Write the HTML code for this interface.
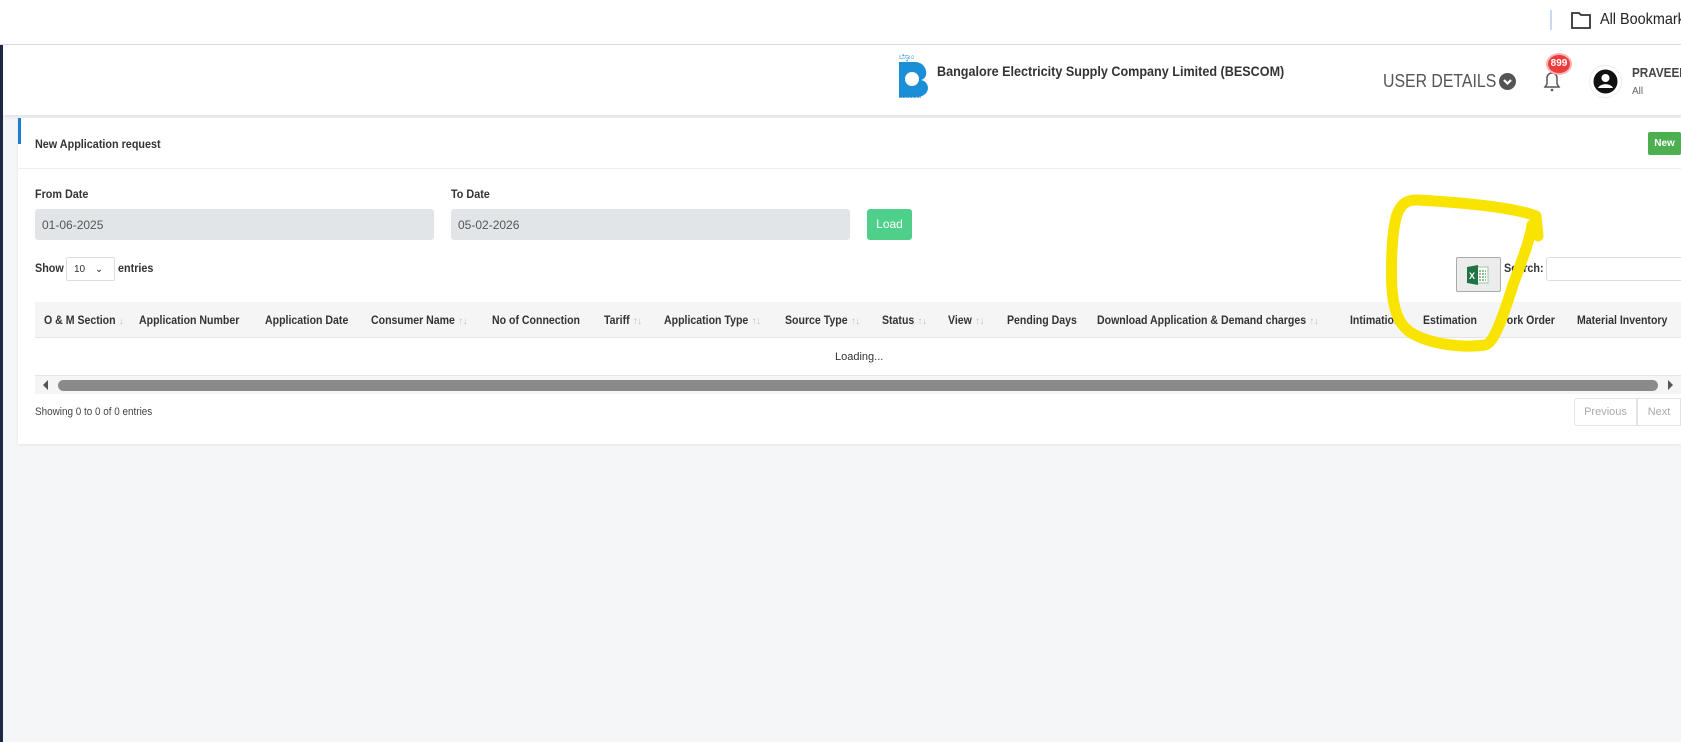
<!DOCTYPE html>
<html><head><meta charset="utf-8"><style>
*{box-sizing:border-box;margin:0;padding:0}
body{width:1681px;height:742px;overflow:hidden;background:#f5f6f8;font-family:"Liberation Sans",sans-serif;position:relative;color:#333}
.a{position:absolute;white-space:nowrap}
.n{transform:scaleX(.9);transform-origin:left center}
.th{position:absolute;top:313px;font-size:12px;font-weight:bold;color:#333;transform:scaleX(.88);transform-origin:left center;white-space:nowrap}
.s{color:#bbb;font-weight:normal;font-size:10px;margin-left:4px}
</style></head><body>
<div class="a" style="left:0;top:0;width:1681px;height:45px;background:#fff;border-bottom:1px solid #dcdcdc"></div>
<div class="a" style="left:1550px;top:10px;width:2px;height:20px;background:#c8d8ee"></div>
<svg class="a" style="left:1570px;top:10px" width="22" height="20"><path d="M2 3h7l2 2h9v13H2z" fill="none" stroke="#333" stroke-width="1.8"/></svg>
<div class="a n" style="left:1600px;top:11px;font-size:16px;color:#222">All Bookmarks</div>
<div class="a" style="left:0;top:45px;width:3px;height:697px;background:#1c2a44"></div>
<div class="a" style="left:3px;top:45px;width:1678px;height:70px;background:#fff;box-shadow:0 2px 4px rgba(0,0,0,.08)"></div>
<svg class="a" style="left:898px;top:51px" width="34" height="48"><text x="1" y="8" font-size="7" fill="#1a8ad0" font-family="Liberation Sans">ಬೆಸ್ಕಾಂ</text><path d="M1 11h16c12 0 15 16 6 18 10 2 10 17-5 17H1z" fill="#1a8fd8"/><circle cx="14" cy="28" r="7" fill="#fff"/><text x="1" y="47" font-size="5" font-weight="bold" fill="#1a8ad0" font-family="Liberation Sans">BESCOM</text></svg>
<div class="a n" style="left:937px;top:63px;font-size:14px;font-weight:bold;color:#333">Bangalore Electricity Supply Company Limited (BESCOM)</div>
<div class="a" style="left:1383px;top:71px;font-size:18px;color:#555;transform:scaleX(.88);transform-origin:left center">USER DETAILS</div>
<div class="a" style="left:1499px;top:73px;width:17px;height:17px;border-radius:50%;background:#555"></div>
<svg class="a" style="left:1499px;top:73px" width="17" height="17"><path d="M5 7l3.5 3.5L12 7" stroke="#fff" stroke-width="2.2" fill="none"/></svg>
<svg class="a" style="left:1540px;top:68px" width="24" height="26"><path d="M5 19h14l-2-3v-6a5 5 0 0 0-10 0v6z" fill="none" stroke="#555" stroke-width="1.5"/><circle cx="12" cy="22" r="1.3" fill="#555"/></svg>
<div class="a" style="left:1546px;top:53px;width:26px;height:22px;border-radius:50%;background:#ee3b3b;border:2px solid #f9b5b5;color:#fff;font-size:10px;font-weight:bold;text-align:center;line-height:18px">899</div>
<div class="a" style="left:1589px;top:65px;width:33px;height:33px;border-radius:50%;background:#fff;border:1px solid #eee"></div>
<svg class="a" style="left:1592px;top:68px" width="27" height="27"><circle cx="13.5" cy="13.5" r="12" fill="#111"/><circle cx="13.5" cy="10" r="4" fill="#fff"/><path d="M6 20c2-5 13-5 15 0" fill="#fff"/></svg>
<div class="a n" style="left:1632px;top:65px;font-size:13px;font-weight:bold;color:#444">PRAVEEN</div>
<div class="a" style="left:1632px;top:86px;font-size:10px;color:#666">All</div>

<div class="a" style="left:18px;top:118px;width:1663px;height:326px;background:#fff;box-shadow:0 1px 3px rgba(0,0,0,.08)"></div>
<div class="a" style="left:18px;top:118px;width:3px;height:26px;background:#1a7fd0"></div>
<div class="a n" style="left:35px;top:137px;font-size:12px;font-weight:bold;color:#333">New Application request</div>
<div class="a" style="left:18px;top:168px;width:1663px;height:1px;background:#eee"></div>
<div class="a" style="left:1648px;top:132px;width:33px;height:23px;background:#4caf50;border-radius:2px;color:#fff;font-size:10px;font-weight:bold;text-align:center;line-height:23px">New</div>
<div class="a n" style="left:35px;top:187px;font-size:12px;font-weight:bold">From Date</div>
<div class="a n" style="left:451px;top:187px;font-size:12px;font-weight:bold">To Date</div>
<div class="a" style="left:35px;top:209px;width:399px;height:31px;background:#e2e5e8;border-radius:3px;font-size:12px;color:#555;padding:9px 7px">01-06-2025</div>
<div class="a" style="left:451px;top:209px;width:399px;height:31px;background:#e2e5e8;border-radius:3px;font-size:12px;color:#555;padding:9px 7px">05-02-2026</div>
<div class="a" style="left:867px;top:209px;width:45px;height:31px;background:#4fd08a;border-radius:3px;color:#fff;font-size:12px;text-align:center;line-height:31px">Load</div>
<div class="a n" style="left:35px;top:261px;font-size:12px;font-weight:bold">Show</div>
<div class="a" style="left:66px;top:257px;width:49px;height:24px;border:1px solid #ddd;border-radius:2px;font-size:10px;padding:6px 7px">10 <span style="margin-left:7px">⌄</span></div>
<div class="a n" style="left:118px;top:261px;font-size:12px;font-weight:bold">entries</div>
<div class="a" style="left:1456px;top:257px;width:45px;height:35px;background:#ececec;border:1px solid #aaa;border-radius:2px"></div>
<svg class="a" style="left:1466px;top:264px" width="24" height="22"><rect x="9" y="3" width="13" height="16" fill="#fff" stroke="#9c9" stroke-width="1"/><path d="M13 7h7M13 10h7M13 13h7M13 16h7" stroke="#2a7a3a" stroke-width="1" stroke-dasharray="2 1"/><path d="M1 3l11-2v20L1 19z" fill="#217346"/><text x="3" y="15" font-size="9" font-weight="bold" fill="#fff" font-family="Liberation Sans">X</text></svg>
<div class="a n" style="left:1504px;top:261px;font-size:12px;font-weight:bold">Search:</div>
<div class="a" style="left:1546px;top:257px;width:140px;height:24px;border:1px solid #ddd;border-radius:3px;background:#fff"></div>

<div class="a" style="left:35px;top:302px;width:1646px;height:36px;background:#f5f5f5;border-bottom:1px solid #e5e5e5"></div>
<div class="th" style="left:44px">O &amp; M Section<span class="s">↓</span></div>
<div class="th" style="left:139px">Application Number</div>
<div class="th" style="left:265px">Application Date</div>
<div class="th" style="left:371px">Consumer Name<span class="s">↑↓</span></div>
<div class="th" style="left:492px">No of Connection</div>
<div class="th" style="left:604px">Tariff<span class="s">↑↓</span></div>
<div class="th" style="left:664px">Application Type<span class="s">↑↓</span></div>
<div class="th" style="left:785px">Source Type<span class="s">↑↓</span></div>
<div class="th" style="left:882px">Status<span class="s">↑↓</span></div>
<div class="th" style="left:948px">View<span class="s">↑↓</span></div>
<div class="th" style="left:1007px">Pending Days</div>
<div class="th" style="left:1097px">Download Application &amp; Demand charges<span class="s">↑↓</span></div>
<div class="th" style="left:1350px">Intimation</div>
<div class="th" style="left:1423px">Estimation</div>
<div class="th" style="left:1497px">Work Order</div>
<div class="th" style="left:1577px">Material Inventory</div>
<div class="a" style="left:835px;top:351px;font-size:11px;color:#333">Loading...</div>
<div class="a" style="left:35px;top:375px;width:1646px;height:1px;background:#e5e5e5"></div>
<div class="a" style="left:35px;top:376px;width:1646px;height:18px;background:#f5f5f5"></div>
<svg class="a" style="left:40px;top:378px" width="10" height="14"><path d="M8 2L3 7l5 5z" fill="#555"/></svg>
<div class="a" style="left:58px;top:380px;width:1600px;height:11px;border-radius:6px;background:#8a8a8a"></div>
<svg class="a" style="left:1666px;top:378px" width="10" height="14"><path d="M2 2l5 5-5 5z" fill="#555"/></svg>
<div class="a n" style="left:35px;top:406px;font-size:11px;color:#444">Showing 0 to 0 of 0 entries</div>
<div class="a" style="left:1574px;top:398px;width:63px;height:28px;border:1px solid #e3e3e3;border-radius:3px 0 0 3px;font-size:11px;color:#aaa;text-align:center;line-height:26px">Previous</div>
<div class="a" style="left:1637px;top:398px;width:44px;height:28px;border:1px solid #e3e3e3;font-size:11px;color:#aaa;text-align:center;line-height:26px">Next</div>

<svg class="a" style="left:0;top:0" width="1681" height="742"><path d="M1538 236 L1536 216 C1515 208 1470 203 1418 200 C1398 199 1394 215 1392 250 C1390 290 1392 320 1410 332 C1430 345 1465 348 1485 345 C1495 343 1505 310 1513 285 C1522 260 1530 240 1532 225" fill="none" stroke="#f8e400" stroke-width="11" stroke-linecap="round" stroke-linejoin="round"/></svg>
</body></html>
